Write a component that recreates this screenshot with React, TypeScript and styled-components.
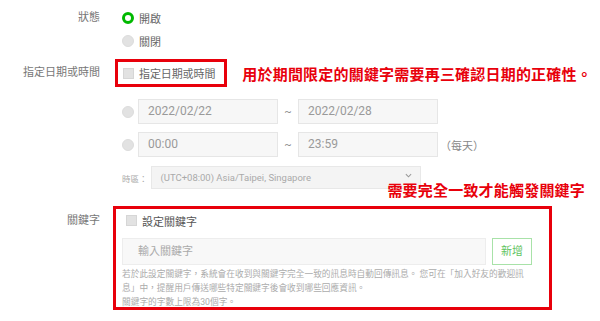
import React from "react";
import styled, { createGlobalStyle } from "styled-components";

const GlobalStyle = createGlobalStyle`
  html, body {
    margin: 0;
    padding: 0;
    background: #fff;
  }
  body {
    font-family: Roboto, "Noto Sans CJK TC", sans-serif;
    color: #555;
  }
`;

const RED = "#e8000b";
const GREEN = "#00b900";

const helpLines = [
  "若於此設定關鍵字，系統會在收到與關鍵字完全一致的訊息時自動回傳訊息。 您可在「加入好友的歡迎訊",
  "息」中，提醒用戶傳送哪些特定關鍵字後會收到哪些回應資訊。",
  "關鍵字的字數上限為30個字。",
];

export default function App() {
  return (
    <>
      <GlobalStyle />
      <Page>
        <Row $top={6}>
          <Label $h={23}>狀態</Label>
          <Column>
            <Choice>
              <Radio $checked />
              <ChoiceText>開啟</ChoiceText>
            </Choice>
            <Choice>
              <Radio />
              <ChoiceText>關閉</ChoiceText>
            </Choice>
          </Column>
        </Row>

        <Row $top={7}>
          <Label $h={28}>指定日期或時間</Label>
          <Column>
            <Line>
              <Highlight $pad="0 9px 0 5px">
                <Choice>
                  <Checkbox />
                  <ChoiceText>指定日期或時間</ChoiceText>
                </Choice>
              </Highlight>
              <Note>用於期間限定的關鍵字需要再三確認日期的正確性。</Note>
            </Line>
            <RangeRow $top={12}>
              <Radio />
              <Field>2022/02/22</Field>
              <Tilde>~</Tilde>
              <Field>2022/02/28</Field>
            </RangeRow>
            <RangeRow $top={8}>
              <Radio />
              <Field>00:00</Field>
              <Tilde>~</Tilde>
              <Field>23:59</Field>
              <Daily>（每天）</Daily>
            </RangeRow>
            <ZoneRow>
              <ZoneLabel>時區：</ZoneLabel>
              <Select>
                <span>(UTC+08:00) Asia/Taipei, Singapore</span>
                <Chevron viewBox="0 0 8 5" width="7" height="5">
                  <path d="M1 1l3 3 3-3" fill="none" stroke="#999" strokeWidth="1.2" />
                </Chevron>
              </Select>
            </ZoneRow>
          </Column>
        </Row>

        <Row $top={17}>
          <Label $h={24} $pad={3}>關鍵字</Label>
          <Column>
            <FloatNote>需要完全一致才能觸發關鍵字</FloatNote>
            <KeywordBox>
              <Choice>
                <Checkbox />
                <ChoiceText $dark>設定關鍵字</ChoiceText>
              </Choice>
              <InputRow>
                <KeywordInput>輸入關鍵字</KeywordInput>
                <AddButton>新增</AddButton>
              </InputRow>
              <Help>
                {helpLines.map((l) => (
                  <div key={l}>{l}</div>
                ))}
              </Help>
            </KeywordBox>
          </Column>
        </Row>
      </Page>
    </>
  );
}

const Page = styled.div`
  width: 600px;
  height: 321px;
  overflow: hidden;
`;

const Row = styled.div<{ $top: number }>`
  display: grid;
  grid-template-columns: 100px 1fr;
  column-gap: 13px;
  margin-top: ${(p) => p.$top}px;
`;

const Label = styled.div<{ $h: number; $pad?: number }>`
  text-align: right;
  font-size: 11px;
  color: #777;
  line-height: ${(p) => p.$h}px;
  padding-top: ${(p) => p.$pad || 0}px;
`;

const Column = styled.div`
  position: relative;
  display: flex;
  flex-direction: column;
  align-items: flex-start;
`;

const Choice = styled.div`
  display: flex;
  align-items: center;
  height: 23px;
  padding-left: 9px;
  gap: 5px;
`;

const ChoiceText = styled.span<{ $dark?: boolean }>`
  font-size: 11px;
  color: ${(p) => (p.$dark ? "#555" : "#666")};
`;

const Radio = styled.span<{ $checked?: boolean }>`
  box-sizing: border-box;
  width: 12px;
  height: 12px;
  border-radius: 50%;
  flex: none;
  background: ${(p) => (p.$checked ? "#fff" : "#e2e2e2")};
  border: ${(p) => (p.$checked ? `3px solid ${GREEN}` : "1px solid #dcdcdc")};
`;

const Checkbox = styled.span`
  box-sizing: border-box;
  width: 11px;
  height: 11px;
  flex: none;
  background: #e2e2e2;
  border: 1px solid #d6d6d6;
`;

const Line = styled.div`
  display: flex;
  align-items: center;
`;

const Highlight = styled.div<{ $pad: string }>`
  margin-left: 2px;
  border: 3px solid ${RED};
  padding: ${(p) => p.$pad};
  display: flex;
  align-items: center;
  height: 22px;
  & > div {
    padding-left: 0;
  }
  & span {
    letter-spacing: -0.1px;
  }
`;

const Note = styled.span`
  margin-left: 15px;
  font-size: 15px;
  font-weight: 700;
  color: ${RED};
  letter-spacing: 0.2px;
  white-space: nowrap;
`;

const RangeRow = styled.div<{ $top: number }>`
  display: flex;
  align-items: center;
  padding-left: 9px;
  margin-top: ${(p) => p.$top}px;
  & > span:first-child {
    margin-right: 4px;
  }
`;

const Field = styled.div`
  box-sizing: border-box;
  width: 140px;
  height: 25px;
  line-height: 23px;
  padding-left: 9px;
  background: #f7f7f7;
  border: 1px solid #e6e6e6;
  font-size: 12px;
  color: #9a9a9a;
`;

const Tilde = styled.span`
  width: 20px;
  text-align: center;
  font-size: 11px;
  color: #888;
`;

const Daily = styled.span`
  margin-left: 2px;
  font-size: 11px;
  color: #888;
`;

const ZoneRow = styled.div`
  display: flex;
  align-items: center;
  padding-left: 9px;
  margin-top: 9px;
  gap: 3px;
`;

const ZoneLabel = styled.span`
  flex: none;
  white-space: nowrap;
  font-size: 8.5px;
  color: #aaa;
`;

const Select = styled.div`
  box-sizing: border-box;
  width: 270px;
  height: 23px;
  display: flex;
  align-items: center;
  justify-content: space-between;
  padding: 0 8px 0 9px;
  background: #f4f4f4;
  border: 1px solid #e8e8e8;
  font-size: 9.5px;
  color: #aaa;
`;

const Chevron = styled.svg`
  margin-top: -5px;
`;

const FloatNote = styled.div`
  position: absolute;
  top: -27px;
  right: 15px;
  font-size: 15px;
  font-weight: 700;
  color: ${RED};
  letter-spacing: 0.2px;
  white-space: nowrap;
`;

const KeywordBox = styled.div`
  box-sizing: border-box;
  width: 439px;
  height: 104px;
  border: 3px solid ${RED};
  padding: 0 17px 0 6px;
  & > div:first-child {
    padding-left: 4px;
    margin-top: 0;
  }
`;

const InputRow = styled.div`
  display: flex;
  gap: 6px;
  margin-top: 6px;
`;

const KeywordInput = styled.div`
  box-sizing: border-box;
  width: 364px;
  height: 27px;
  line-height: 25px;
  padding-left: 15px;
  background: #f8f8f8;
  border: 1px solid #ededed;
  font-size: 11px;
  color: #aaa;
`;

const AddButton = styled.div`
  box-sizing: border-box;
  width: 40px;
  height: 27px;
  line-height: 25px;
  text-align: center;
  border: 1px solid #a8e2a8;
  background: #fff;
  font-size: 11px;
  color: #5fc45f;
`;

const Help = styled.div`
  margin-top: 2px;
  font-size: 8.7px;
  line-height: 14px;
  color: #ababab;
  white-space: nowrap;
`;
